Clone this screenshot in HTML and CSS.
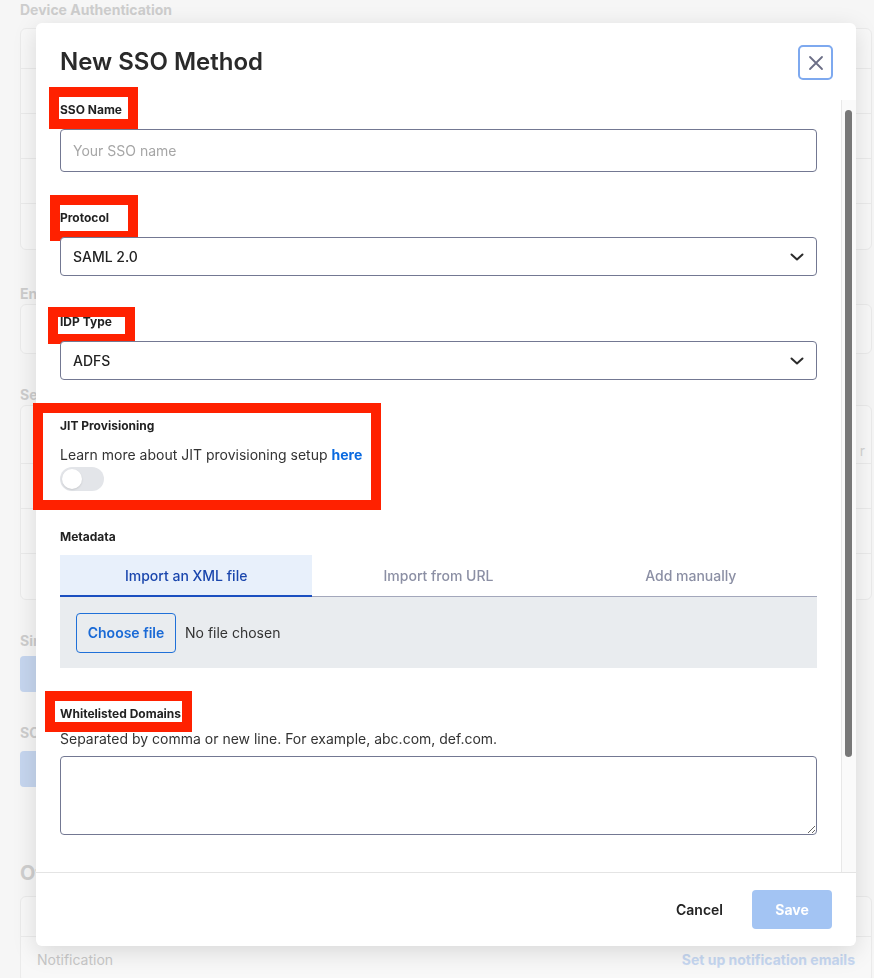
FILE: index.html
```html
<!DOCTYPE html>
<html lang="en">
<head>
  <meta charset="UTF-8">
  <meta name="viewport" content="width=device-width, initial-scale=1.0">
  <title>New SSO Method</title>
  <link rel="stylesheet" href="styles.css">
</head>
<body>

<div class="page">
  <h3 class="bg-title first">Device Authentication</h3>
  <div class="bg-card card-device">
    <div class="bg-row short"></div>
    <div class="bg-row"></div>
    <div class="bg-row"></div>
    <div class="bg-row"></div>
    <div class="bg-row"></div>
  </div>

  <h3 class="bg-title">Enrollment</h3>
  <div class="bg-card">
    <div class="bg-row"></div>
  </div>

  <h3 class="bg-title">Session</h3>
  <div class="bg-card">
    <div class="bg-row tall"><span class="bg-right">r</span></div>
    <div class="bg-row"></div>
    <div class="bg-row"></div>
    <div class="bg-row"></div>
  </div>

  <h3 class="bg-title">Single Sign-On</h3>
  <button class="bg-button">New</button>

  <h3 class="bg-title">SCIM</h3>
  <button class="bg-button spaced">Set up</button>

  <h2 class="bg-heading">Other</h2>
  <div class="bg-card card-other">
    <div class="bg-row short"></div>
    <div class="bg-row bg-row-text">
      <span>Notification</span>
      <a href="#" class="bg-link">Set up notification emails</a>
    </div>
  </div>
</div>

<div class="modal">
  <div class="modal-header">
    <h2>New SSO Method</h2>
    <button class="close-btn" aria-label="Close">
      <svg width="16" height="16" viewBox="0 0 16 16">
        <path d="M2 2 L14 14 M14 2 L2 14" stroke="#6b6e86" stroke-width="1.8" stroke-linecap="round" fill="none"/>
      </svg>
    </button>
  </div>

  <div class="modal-main">
    <div class="modal-body">
      <div class="field">
        <label class="field-label marked mark-name">SSO Name</label>
        <input type="text" class="input" placeholder="Your SSO name">
      </div>

      <div class="field">
        <label class="field-label marked mark-protocol">Protocol</label>
        <div class="select-wrap">
          <select class="select">
            <option>SAML 2.0</option>
          </select>
          <svg class="chevron" width="14" height="8" viewBox="0 0 14 8">
            <path d="M1.5 1.5 L7 6.5 L12.5 1.5" stroke="#2b2b2b" stroke-width="2" fill="none" stroke-linecap="round" stroke-linejoin="round"/>
          </svg>
        </div>
      </div>

      <div class="field">
        <label class="field-label marked mark-idp">IDP Type</label>
        <div class="select-wrap">
          <select class="select">
            <option>ADFS</option>
          </select>
          <svg class="chevron" width="14" height="8" viewBox="0 0 14 8">
            <path d="M1.5 1.5 L7 6.5 L12.5 1.5" stroke="#2b2b2b" stroke-width="2" fill="none" stroke-linecap="round" stroke-linejoin="round"/>
          </svg>
        </div>
      </div>

      <div class="field marked mark-jit">
        <label class="field-label">JIT Provisioning</label>
        <p class="help">Learn more about JIT provisioning setup <a href="#">here</a></p>
        <span class="toggle"><span class="knob"></span></span>
      </div>

      <div class="field">
        <label class="field-label meta-label">Metadata</label>
        <div class="tabs">
          <div class="tab active">Import an XML file</div>
          <div class="tab">Import from URL</div>
          <div class="tab">Add manually</div>
        </div>
        <div class="tab-panel">
          <button class="file-btn">Choose file</button>
          <span class="file-name">No file chosen</span>
        </div>
      </div>

      <div class="field">
        <label class="field-label tight marked mark-domains">Whitelisted Domains</label>
        <p class="help help-gap">Separated by comma or new line. For example, abc.com, def.com.</p>
        <textarea class="textarea"></textarea>
      </div>
    </div>

    <div class="scrollbar">
      <div class="thumb"></div>
    </div>
  </div>

  <div class="modal-footer">
    <button class="cancel-btn">Cancel</button>
    <button class="save-btn">Save</button>
  </div>
</div>

</body>
</html>
```

FILE: styles.css
```css
*,
*::before,
*::after {
  margin: 0;
  padding: 0;
  box-sizing: border-box;
  font-family: Inter, "Noto Sans", sans-serif;
}

body {
  background-color: #f6f6f6;
  height: 978px;
  overflow: hidden;
}

/* page behind the dialog */

.page {
  padding: 0 2px 0 20px;
}

.bg-title {
  font-size: 14px;
  font-weight: 700;
  color: #cdcdcd;
  line-height: 16px;
}

.bg-title.first {
  margin-top: 2px;
}

.bg-card {
  background-color: #f8f8f8;
  border: 1px solid #ebebeb;
  border-radius: 6px;
  margin: 2px 0 33px;
}

.card-device {
  margin: 10px 0 36px;
}

.card-other {
  margin-top: 11px;
}

.bg-row {
  height: 48px;
  border-bottom: 1px solid #ebebeb;
  position: relative;
}

.bg-row.short {
  height: 40px;
}

.bg-row.tall {
  height: 58px;
}

.bg-row:last-child {
  border-bottom: none;
}

.bg-card .bg-row + .bg-row {
  height: 45px;
}

.bg-right {
  position: absolute;
  right: 6px;
  top: 36px;
  font-size: 14px;
  color: #d4d4d4;
}

.bg-button {
  display: block;
  width: 90px;
  height: 36px;
  margin: 7px 0 33px;
  border: none;
  border-radius: 4px;
  background-color: #c6d6ef;
  color: #fff;
  font-size: 14px;
  font-weight: 700;
}

.bg-button.spaced {
  margin-top: 10px;
  margin-bottom: 74px;
}

.bg-heading {
  font-size: 20px;
  font-weight: 700;
  line-height: 24px;
  color: #cfcfcf;
}

.bg-card .bg-row-text {
  height: 40px;
  display: flex;
  justify-content: space-between;
  align-items: center;
  padding: 0 16px 0 16px;
  font-size: 14px;
  color: #c8c8c8;
}

.bg-link {
  color: #c6d7f1;
  font-weight: 700;
  text-decoration: none;
}

/* dialog */

.modal {
  position: fixed;
  left: 36px;
  top: 23px;
  width: 820px;
  height: 923px;
  background-color: #fff;
  border-radius: 6px;
  box-shadow: 0 6px 24px rgba(0, 0, 0, 0.13);
  display: flex;
  flex-direction: column;
}

.modal-header {
  height: 77px;
  padding: 22px 23px 0 24px;
  display: flex;
  justify-content: space-between;
  align-items: flex-start;
}

.modal-header h2 {
  font-size: 24px;
  font-weight: 600;
  line-height: 30px;
  margin-top: 2px;
  color: #2a2a2a;
}

.close-btn {
  width: 35px;
  height: 35px;
  border: 2px solid #7ea9ef;
  border-radius: 5px;
  background: #fff;
  display: flex;
  justify-content: center;
  align-items: center;
}

.modal-main {
  flex: 1;
  display: flex;
  min-height: 0;
}

.modal-body {
  flex: 1;
  padding: 2px 24px 0 24px;
}

.scrollbar {
  width: 15px;
  border-left: 1px solid #e8e8e8;
  background-color: #fafafa;
  padding: 10px 0 0 3px;
}

.thumb {
  width: 7px;
  height: 647px;
  border-radius: 4px;
  background-color: #787878;
}

.field {
  margin-bottom: 38px;
}

.field-label {
  display: block;
  width: max-content;
  font-size: 12px;
  font-weight: 700;
  line-height: 16px;
  color: #222;
  margin-bottom: 11px;
}

.field-label.tight {
  margin-bottom: 7px;
}

.meta-label {
  margin-bottom: 10px;
}

.input,
.select,
.textarea {
  display: block;
  width: 100%;
  border: 1px solid #737892;
  border-radius: 4px;
  font-size: 14px;
  color: #222;
  background: #fff;
}

.input {
  height: 43px;
  padding: 0 12px;
}

.input::placeholder {
  color: #a6a6a6;
}

.select-wrap {
  position: relative;
}

.select {
  height: 39px;
  padding: 0 12px;
  appearance: none;
  -webkit-appearance: none;
  font-weight: 500;
}

.chevron {
  position: absolute;
  right: 13px;
  top: 16px;
}

.help {
  font-size: 14px;
  line-height: 20px;
  color: #333;
}

.help a {
  color: #0a6ae0;
  font-weight: 700;
  text-decoration: none;
}

.help-gap {
  margin-bottom: 7px;
}

.toggle {
  display: block;
  width: 44px;
  height: 24px;
  margin-top: 2px;
  border-radius: 12px;
  background-color: #e3e5e9;
  padding: 2px;
}

.knob {
  display: block;
  width: 20px;
  height: 20px;
  border-radius: 50%;
  background-color: #fff;
  box-shadow: 0 1px 2px rgba(0, 0, 0, 0.12);
}

.tabs {
  display: grid;
  grid-template-columns: 1fr 1fr 1fr;
}

.tab {
  height: 42px;
  display: flex;
  justify-content: center;
  align-items: center;
  font-size: 14px;
  font-weight: 500;
  color: #8b8fa4;
  border-bottom: 1px solid #a3a7bb;
}

.tab.active {
  background-color: #e8f0fb;
  color: #1a46ad;
  border-bottom: 2px solid #1a4fc0;
}

.tab-panel {
  height: 71px;
  background-color: #e9ecef;
  padding: 0 16px;
  display: flex;
  align-items: center;
}

.file-btn {
  width: 100px;
  height: 40px;
  border: 1px solid #1f70d8;
  border-radius: 4px;
  background: transparent;
  color: #1a6ad6;
  font-size: 14px;
  font-weight: 600;
}

.file-name {
  margin-left: 9px;
  font-size: 14px;
  color: #333;
}

.textarea {
  height: 79px;
  padding: 8px 12px;
}

/* red highlight boxes drawn over the labels */

.marked {
  position: relative;
}

.marked::after {
  content: "";
  position: absolute;
  border: 10px solid #ff2100;
  pointer-events: none;
}

.mark-name::after {
  left: -11px;
  top: -15px;
  width: 89px;
  height: 42px;
}

.mark-protocol::after {
  left: -10px;
  top: -15px;
  width: 88px;
  height: 46px;
}

.mark-idp::after {
  left: -12px;
  top: -7px;
  width: 87px;
  height: 37px;
}

.mark-jit::after {
  left: -27px;
  top: -15px;
  width: 348px;
  height: 107px;
}

.mark-domains::after {
  left: -15px;
  top: -15px;
  width: 147px;
  height: 41px;
}

.modal-footer {
  height: 74px;
  border-top: 1px solid #e4e4e4;
  padding: 0 24px;
  display: flex;
  justify-content: flex-end;
  align-items: center;
}

.cancel-btn {
  height: 39px;
  padding: 0 16px;
  margin-right: 13px;
  border: none;
  background: transparent;
  font-size: 14px;
  font-weight: 600;
  color: #222;
}

.save-btn {
  width: 80px;
  height: 39px;
  border: none;
  border-radius: 4px;
  background-color: #a3c4f3;
  color: #fff;
  font-size: 14px;
  font-weight: 700;
}
```
